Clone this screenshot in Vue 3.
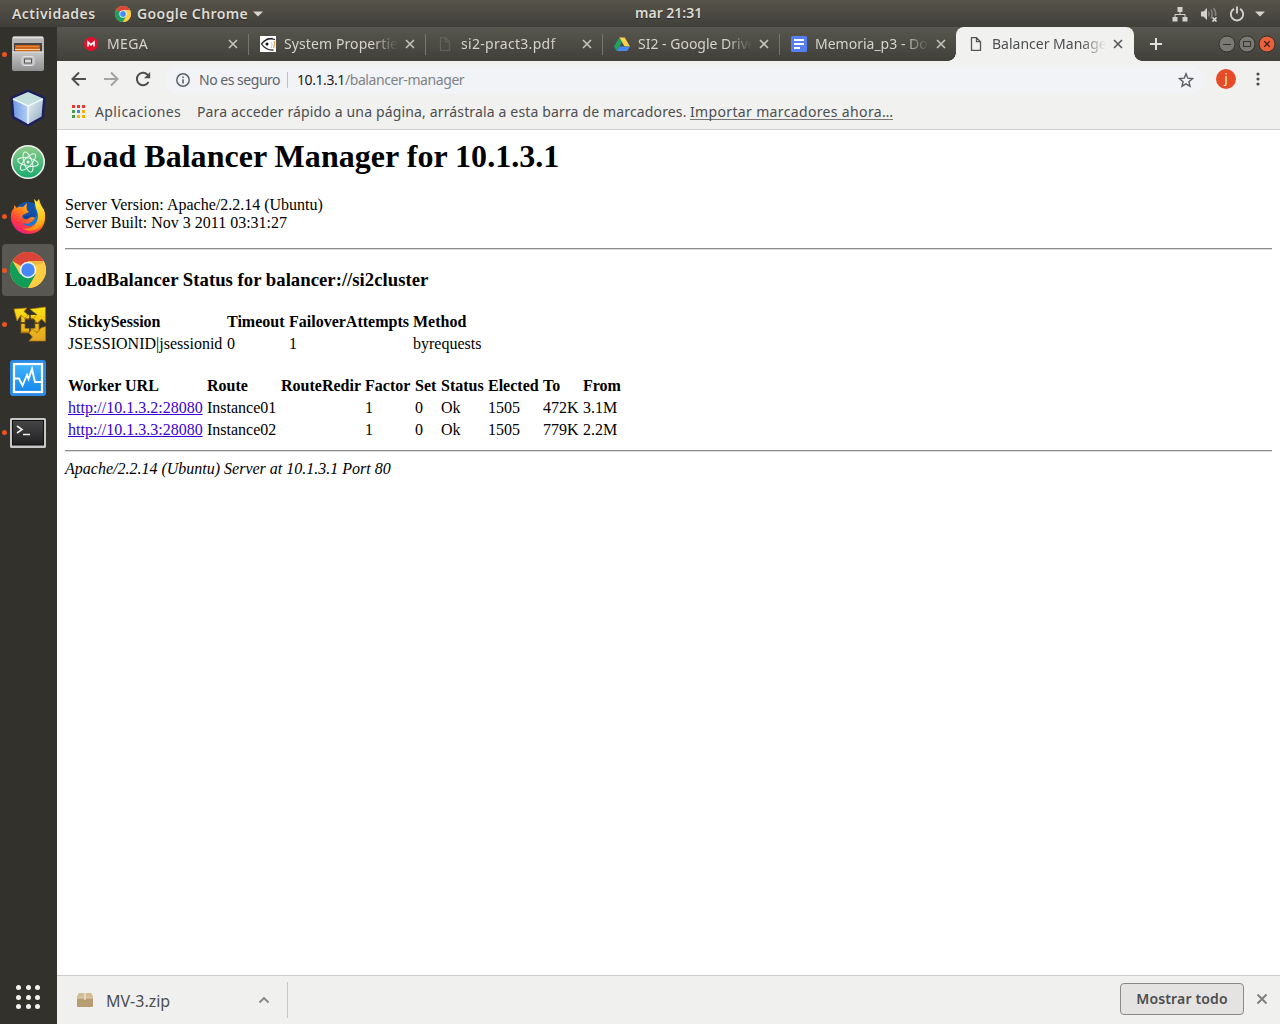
<script setup>
const tabs = [
  { title: 'MEGA', icon: 'mega' },
  { title: 'System Properties', icon: 'fish' },
  { title: 'si2-pract3.pdf', icon: 'page' },
  { title: 'SI2 - Google Drive', icon: 'drive' },
  { title: 'Memoria_p3 - Doc', icon: 'docs' },
  { title: 'Balancer Manager', icon: 'page', active: true },
]
const appColors = ['#e53935', '#e53935', '#e53935', '#43a047', '#4285f4', '#f4b400', '#43a047', '#f4b400', '#f4b400']
const workers = [
  { url: 'http://10.1.3.2:28080', cells: ['Instance01', '', '1', '0', 'Ok', '1505', '472K', '3.1M'] },
  { url: 'http://10.1.3.3:28080', cells: ['Instance02', '', '1', '0', 'Ok', '1505', '779K', '2.2M'] },
]
const workerHeads = ['Worker URL', 'Route', 'RouteRedir', 'Factor', 'Set', 'Status', 'Elected', 'To', 'From']
const dock = [
  { name: 'files', running: true },
  { name: 'netbeans' },
  { name: 'atom' },
  { name: 'firefox', running: true },
  { name: 'chrome', running: true, active: true },
  { name: 'vmware', running: true },
  { name: 'monitor' },
  { name: 'terminal', running: true },
]
</script>

<template>
  <div class="desktop">
    <header class="topbar">
      <span class="activities">Actividades</span>
      <svg class="tb-chrome" width="16" height="16" viewBox="0 0 36 36">
        <circle cx="18" cy="18" r="18" fill="#fc4" />
        <path d="M18 18 2.4 9A18 18 0 0 1 33.6 9Z" fill="#dd4437" />
        <path d="M18 18 2.4 9A18 18 0 0 0 18 36L26 22Z" fill="#1da05c" />
        <path d="M18 9H33.6A18 18 0 0 1 18 36L26 22Z" fill="#fdcd45" />
        <circle cx="18" cy="18" r="8.2" fill="#fff" /><circle cx="18" cy="18" r="6.5" fill="#4a8af5" />
      </svg>
      <span class="appname">Google Chrome</span>
      <svg class="tri" width="10" height="6"><path d="M0 .5H10L5 5.5Z" fill="#d6d4cf" /></svg>
      <span class="clock">mar 21:31</span>
      <div class="tray">
        <svg width="16" height="16" fill="#d3d1cc"><path d="M5.500 1h5v5h-5zM.5 11h5v4.500h-5zM10.500 11h5v4.500h-5z" /><path d="M8 6v2.500M3 11V8.500H13V11" fill="none" stroke="#d3d1cc" /></svg>
        <svg width="18" height="16"><path d="M1 5.500h2.500L7 2v12L3.500 10.500H1z" fill="#d3d1cc" /><path d="M8.500 5.500q1.300 2.500 0 5M11 3.500q2.400 4.500 0 9M13.500 2q3 4 2 8" fill="none" stroke="#85837c" stroke-width="1.500" /><path d="m12.500 11.500 4 4m0-4-4 4" stroke="#e0ded9" stroke-width="1.600" /></svg>
        <svg class="power" width="16" height="16"><path d="M5 2.800A6.200 6.200 0 1 0 11 2.800M8 .5V7.500" fill="none" stroke="#d3d1cc" stroke-width="1.900" /></svg>
        <svg class="menu-tri" width="10" height="6"><path d="M0 .5H10L5 5.500Z" fill="#d6d4cf" /></svg>
      </div>
    </header>

    <div class="body">
      <aside class="dock">
        <div v-for="d in dock" :key="d.name" class="slot">
          <i v-if="d.running" class="dot"></i>
          <div class="tile" :class="{ on: d.active, low: d.name === 'terminal' }">
            <svg v-if="d.name === 'files'" width="36" height="36" viewBox="0 0 36 36">
              <defs><linearGradient id="fg" x2="0" y2="1"><stop stop-color="#c9c9c9" /><stop offset="1" stop-color="#8f8f8f" /></linearGradient></defs>
              <rect x="2" y=".5" width="32" height="34" rx="2.500" fill="#b5b5b5" /><path d="M3 1.500h30" stroke="#ddd" stroke-width="2" />
              <rect x="4" y="7" width="28" height="10" fill="#454545" /><path d="M5 9h25v7H5z" fill="#c75c15" /><path d="M6 10.500h23" stroke="#e88a3a" stroke-width="1.200" /><path d="M5 13.500h25" stroke="#ffd09a" stroke-width="1.200" />
              <path d="M2 15.500h32V33q0 2-2 2H4q-2 0-2-2z" fill="url(#fg)" /><path d="M2 16h32" stroke="#ddd" />
              <rect x="12" y="20.500" width="12" height="9" rx="2" fill="#bbb" stroke="#e2e2e2" /><rect x="14.500" y="23" width="7" height="4" fill="#ddd" stroke="#555" />
            </svg>
            <svg v-else-if="d.name === 'netbeans'" width="36" height="38" viewBox="0 0 36 38">
              <defs><linearGradient id="nb"><stop stop-color="#6f98e4" /><stop offset="1" stop-color="#b5d0f3" /></linearGradient><linearGradient id="nr" x2="1" y2="1"><stop stop-color="#e8f0f6" /><stop offset="1" stop-color="#8fa9c0" /></linearGradient></defs>
              <path d="M18 2 34 9 32.500 28 18 36 3.500 28 2 9Z" fill="#a9c4e8" stroke="#1c1f5d" stroke-width="3" stroke-linejoin="round" />
              <path d="M3 10 18 17V35L4.500 27.500Z" fill="url(#nb)" /><path d="M33 10 18 17V35L31.500 27.500Z" fill="url(#nr)" /><path d="M18 3 33 9.500 18 17 3 9.500Z" fill="#c3dedb" /><path d="M3 10 18 17 33 10M18 17V35" fill="none" stroke="#eef8fb" stroke-width="1.400" />
            </svg>
            <svg v-else-if="d.name === 'atom'" width="34" height="34" viewBox="0 0 34 34">
              <defs><linearGradient id="ag" x2="0" y2="1"><stop stop-color="#90cc8a" /><stop offset="1" stop-color="#18a96f" /></linearGradient></defs>
              <circle cx="17" cy="17" r="16.200" fill="url(#ag)" stroke="#eef3ef" stroke-width="1.600" />
              <g fill="none" stroke="#e9f8ef" stroke-width="1"><ellipse cx="17" cy="17" rx="10.500" ry="4" transform="rotate(12 17 17)" /><ellipse cx="17" cy="17" rx="10.500" ry="4" transform="rotate(72 17 17)" /><ellipse cx="17" cy="17" rx="10.500" ry="4" transform="rotate(132 17 17)" /></g><circle cx="17" cy="17" r="1.500" fill="#fff" />
            </svg>
            <svg v-else-if="d.name === 'firefox'" width="36" height="36" viewBox="0 0 36 36">
              <defs><linearGradient id="ff" x1=".8" x2=".2" y2="1"><stop stop-color="#ffd92e" /><stop offset=".45" stop-color="#ff8a16" /><stop offset=".75" stop-color="#ff3647" /><stop offset="1" stop-color="#e3158b" /></linearGradient><linearGradient id="fy" x2="0" y2="1"><stop stop-color="#fff43f" /><stop offset=".6" stop-color="#ffc11c" /><stop offset="1" stop-color="#ff8415" /></linearGradient></defs>
              <circle cx="18" cy="19" r="14.500" fill="#1279dc" /><path d="M9 7Q16 1 24 6L27 17 20 25 11 19Z" fill="#1550a8" />
              <path d="M4 7 7 10Q10 8 13 9L17 5Q16 9 17 12L19 14 13 17Q11 19 14 21 18 22 19 20 23 18 25 20 20 28 12 25 18 31 25 26 31 20 26 9 25 4 29 1 30 5 32 9 36 14 35 22 33 35 19 36 5 36 1 22 0 14 4 10Z" fill="url(#ff)" />
              <path d="M24 1 26 10Q31 20 24 28 17 32 12 30 20 36 29 30 37 23 34 12 31 7 28 5L24 1Z" fill="url(#fy)" />
              <path d="M14 18.500Q19 18 22 16 20 21 14 20Z" fill="#123e91" />
            </svg>
            <svg v-else-if="d.name === 'chrome'" width="36" height="36" viewBox="0 0 36 36">
              <circle cx="18" cy="18" r="18" fill="#fdcd45" /><path d="M18 18 2.400 9A18 18 0 0 1 33.600 9H18Z" fill="#dc4437" />
              <path d="M10.200 22.500 2.400 9A18 18 0 0 0 18 36L25.800 22.500 18 18Z" fill="#109d58" /><path d="M18 9H33.600A18 18 0 0 1 18 36L25.800 22.500Z" fill="#ffcd44" />
              <path d="M18 9H33.600L32 12 24 13Z" fill="#e5ac38" opacity=".6" /><circle cx="18" cy="18" r="8.300" fill="#f3f3f3" /><circle cx="18" cy="18" r="6.700" fill="#4687f4" />
            </svg>
            <svg v-else-if="d.name === 'vmware'" class="vm" width="34" height="36" viewBox="0 0 34 36">
              <defs><linearGradient id="vm" gradientUnits="userSpaceOnUse" x1="0" y1="0" x2="0" y2="36"><stop stop-color="#ffe81a" /><stop offset=".5" stop-color="#f0bd10" /><stop offset="1" stop-color="#e3a42a" /></linearGradient></defs>
              <path d="M11 11H25V25H11Z" fill="none" stroke="#a87606" stroke-width="4.500" /><path d="M11 10.500H25V24H11Z" fill="none" stroke="url(#vm)" stroke-width="3" />
              <path d="M18 8v5M9 17h4M23 17h4M18 22v5" stroke="#3a3223" stroke-width="1.500" />
              <g fill="url(#vm)" stroke="#a87606" stroke-width=".7" stroke-linejoin="round">
                <path d="M2 3 15 2 12 5.500 16 9 13 12.500 9 9 5 15Z" />
                <path d="M18 3 33.500 1V17L29.500 13 25.500 17 21.500 12.500 25 8.500 21.500 6Z" />
                <path d="M17 35 20.500 31 17 27 20.500 23 25 27 29 22 33.500 20.500V35Z" />
              </g>
            </svg>
            <svg v-else-if="d.name === 'monitor'" width="36" height="36" viewBox="0 0 36 36">
              <defs><linearGradient id="mg" x2="0" y2="1"><stop stop-color="#42b5fa" /><stop offset="1" stop-color="#1687ed" /></linearGradient></defs>
              <rect width="36" height="36" rx="3" fill="#2a8ae4" /><rect x="4" y="4" width="28" height="28" fill="url(#mg)" stroke="#fff" stroke-width="2.200" />
              <path d="M4 18.500h5l3.500 7L17 15l1.500 4 3.500-10 3 13h6" fill="none" stroke="#fff" stroke-width="1.900" />
            </svg>
            <svg v-else width="36" height="30" viewBox="0 0 36 30">
              <defs><linearGradient id="tg" x2="0" y2="1"><stop stop-color="#464646" /><stop offset="1" stop-color="#202020" /></linearGradient></defs>
              <rect width="36" height="30" rx="1.500" fill="#c7c7c7" /><rect x="2.500" y="2.500" width="31" height="24.500" fill="url(#tg)" stroke="#111" />
              <path d="m7 8 5 3.500L7 15M13 16.500h7" fill="none" stroke="#eee" stroke-width="1.600" />
            </svg>
          </div>
        </div>
        <div class="grid9"><i v-for="n in 9" :key="n"></i></div>
      </aside>

      <main class="window">
        <div class="tabstrip">
          <div v-for="(t, i) in tabs" :key="t.title" class="tab" :class="{ active: t.active, nosep: i === 4 }">
            <span class="fav">
              <svg v-if="t.icon === 'mega'" width="16" height="16"><circle cx="8" cy="8" r="7" fill="#e5102b" /><path d="M5 10.500V6L8 8.800 11 6v4.500" fill="none" stroke="#fff" stroke-width="1.600" /></svg>
              <svg v-else-if="t.icon === 'fish'" width="16" height="16"><path d="M0 0h16v16H0z" fill="#fff" /><path d="M15 3.500Q7 1 1.500 8q4.500 6.500 12 6M3.500 5.500l4-2.500 5-.5" fill="none" stroke="#222" stroke-width="1.300" /><path d="M14 5q1.500 3-.5 7" stroke="#eaa65a" fill="none" stroke-width="1.300" /><path d="M11.500 6q1.500 3-.5 6" stroke="#a9cbea" fill="none" /><circle cx="7" cy="8" r="1.500" fill="#111" /></svg>
              <svg v-else-if="t.icon === 'drive'" width="16" height="16"><path d="M5.300 1.500h5.400L16 10.500h-5.400z" fill="#ffd04b" /><path d="M5.300 1.500 8 6.200 2.700 15 0 10.500z" fill="#1ea362" /><path d="M5.500 10.500H16L13.300 15H2.700z" fill="#4688f4" /></svg>
              <svg v-else-if="t.icon === 'docs'" width="16" height="16"><rect width="16" height="16" rx="1.500" fill="#557ff2" /><path d="M3 4h10M3 8h10M3 12h6" stroke="#fff" stroke-width="2" /></svg>
              <svg v-else width="16" height="16"><path d="M3.500 1.700h5l4 4v8.600h-9zM8.500 1.700v4h4" fill="none" :stroke="t.active ? '#555' : '#626159'" stroke-width="1.300" /></svg>
            </span>
            <span class="title" :class="'t' + i">{{ t.title }}</span>
            <svg class="close" width="10" height="10"><path d="m1 1 8 8M9 1 1 9" fill="none" :stroke="t.active ? '#555' : '#c5c4bd'" stroke-width="1.600" /></svg>
            <template v-if="t.active"><i class="curve left"></i><i class="curve right"></i></template>
          </div>
          <svg class="plus" width="12" height="12"><path d="M6 0v12M0 6h12" stroke="#e2e1dc" stroke-width="2" /></svg>
          <div class="controls">
            <svg width="18" height="18"><circle cx="9" cy="9" r="8" fill="#7b7a72" stroke="#33322d" /><path d="M5 9.500h8" stroke="#33322d" /></svg>
            <svg width="18" height="18"><circle cx="9" cy="9" r="8" fill="#7b7a72" stroke="#33322d" /><path d="M5.500 6.500h7v5h-7z" fill="none" stroke="#33322d" /></svg>
            <svg width="18" height="18"><circle cx="9" cy="9" r="8" fill="#e9603a" stroke="#33322d" /><path d="m6.300 6.300 5.400 5.400m0-5.400-5.400 5.400" stroke="#43231a" stroke-width="1.300" /></svg>
          </div>
        </div>

        <div class="toolbar">
          <svg width="16" height="16"><path d="M15 8H2M8 1.500 1.500 8 8 14.500" fill="none" stroke="#4f4f4d" stroke-width="2" /></svg>
          <svg width="16" height="16"><path d="M1 8h13M8 1.500 14.500 8 8 14.500" fill="none" stroke="#a3a3a0" stroke-width="2" /></svg>
          <svg width="16" height="16"><path d="M13.500 11A6.200 6.200 0 1 1 12.500 3.600L14 5" fill="none" stroke="#4f4f4d" stroke-width="2" /><path d="M15.200 1v6.200H9z" fill="#4f4f4d" /></svg>
          <div class="omnibox">
            <svg width="14" height="14"><circle cx="7" cy="7" r="6.200" fill="none" stroke="#5f6368" stroke-width="1.500" /><path d="M7 6.200v4.300M7 3.500v1.600" stroke="#5f6368" stroke-width="1.600" /></svg>
            <span class="insecure">No es seguro</span><i class="bar"></i>
            <span class="url"><b>10.1.3.1</b>/balancer-manager</span>
            <svg class="star" width="16" height="16"><path d="m8 1.800 1.800 4.400 4.700.4-3.600 3.100 1.100 4.600L8 11.800l-4 2.500 1.100-4.600-3.600-3.100 4.700-.4z" fill="none" stroke="#5a5e63" stroke-width="1.400" /></svg>
          </div>
          <span class="avatar">j</span>
          <svg class="more" width="4" height="14" fill="#4f4f4d"><circle cx="2" cy="2" r="1.600" /><circle cx="2" cy="7" r="1.600" /><circle cx="2" cy="12" r="1.600" /></svg>
        </div>

        <div class="bookmarks">
          <div class="apps"><i v-for="(c, i) in appColors" :key="i" :style="{ background: c }"></i></div>
          <span class="apl">Aplicaciones</span>
          <span class="hint">Para acceder rápido a una página, arrástrala a esta barra de marcadores.</span>
          <span class="import">Importar marcadores ahora…</span>
        </div>

        <section class="page">
          <h1>Load Balancer Manager for 10.1.3.1</h1>
          <div class="info">Server Version: Apache/2.2.14 (Ubuntu)<br />Server Built: Nov 3 2011 03:31:27</div>
          <hr class="first" />
          <h3>LoadBalancer Status for balancer://si2cluster</h3>
          <table class="status">
            <tbody>
              <tr><th>StickySession</th><th>Timeout</th><th>FailoverAttempts</th><th>Method</th></tr>
              <tr><td>JSESSIONID|jsessionid</td><td>0</td><td>1</td><td>byrequests</td></tr>
            </tbody>
          </table>
          <table class="workers">
            <tbody>
              <tr><th v-for="h in workerHeads" :key="h">{{ h }}</th></tr>
              <tr v-for="w in workers" :key="w.url"><td><a>{{ w.url }}</a></td><td v-for="(c, i) in w.cells" :key="i">{{ c }}</td></tr>
            </tbody>
          </table>
          <hr />
          <address>Apache/2.2.14 (Ubuntu) Server at 10.1.3.1 Port 80</address>
        </section>

        <footer class="shelf">
          <div class="download">
            <svg width="16" height="14"><path d="M2 0h12l2 4v9q0 1-1 1H1q-1 0-1-1V4z" fill="#b79d72" /><path d="M2 0h12l2 5H0z" fill="#d3bd95" /><path d="M0 5h16" stroke="#e1cfac" /><path d="M8 0v7" stroke="#eee2ca" stroke-width="1.500" /></svg>
            <span class="file">MV-3.zip</span>
            <svg class="chev" width="12" height="8"><path d="m1.500 6.500 4.500-4.500 4.500 4.500" fill="none" stroke="#858583" stroke-width="1.800" /></svg>
          </div>
          <span class="showall">Mostrar todo</span>
          <svg class="sclose" width="12" height="12"><path d="m1.500 1.500 9 9m0-9-9 9" stroke="#80807e" stroke-width="2" /></svg>
        </footer>
      </main>
    </div>
  </div>
</template>

<style>
body { margin: 0; background: #fff; }
</style>

<style scoped>
* { box-sizing: border-box; }
svg { display: block; flex: none; }
.desktop { width: 1280px; height: 1024px; display: flex; flex-direction: column; overflow: hidden; font-family: "Noto Sans", "Open Sans", sans-serif; white-space: nowrap; }
.topbar { height: 27px; flex: none; display: flex; align-items: center; position: relative; padding: 0 15px 0 12px; background: linear-gradient(#57544a, #403f3a); color: #dfdbd2; font-size: 14px; font-weight: 600; text-shadow: 0 1px 1px #2a2925; }
.activities { width: 103px; letter-spacing: .46px; }
.appname { width: 116px; margin-left: 6px; letter-spacing: .4px; }
.clock { position: absolute; left: 635px; top: 3px; line-height: 19px; }
.tray { display: flex; align-items: center; gap: 12px; margin-left: auto; }
.power { margin-left: -1px; }
.menu-tri { margin-left: -2px; }
.body { display: flex; flex: 1; min-height: 0; }
.dock { width: 57px; flex: none; background: #33312c; display: flex; flex-direction: column; }
.slot { height: 54px; position: relative; display: flex; align-items: center; padding-left: 2px; }
.dot { position: absolute; left: 2px; top: 25px; width: 5px; height: 5px; border-radius: 50%; background: #e95420; }
.tile { width: 52px; height: 52px; border-radius: 4px; display: flex; align-items: center; justify-content: center; }
.tile.on { background: #595752; }
.tile.low { padding-top: 2px; }
.vm { margin-left: 2px; }
.grid9 { display: grid; grid-template-columns: repeat(3, 5px); gap: 4.500px; margin: auto 0 15px 16px; }
.grid9 i { width: 5px; height: 5px; border-radius: 50%; background: #f3f3f1; }
.window { flex: 1; min-width: 0; display: flex; flex-direction: column; background: #fff; }
.tabstrip { height: 34px; flex: none; display: flex; padding-left: 15px; align-items: center; background: linear-gradient(#58574e, #403f3a); color: #d5d3cb; font-size: 14px; }
.tab { width: 177px; height: 34px; flex: none; position: relative; display: flex; align-items: center; padding: 0 11px; }
.tab:not(.active):not(.nosep)::after { content: ""; position: absolute; right: 0; top: 7px; height: 21px; width: 1px; background: #77766d; }
.title { width: 114px; margin-left: 8px; margin-bottom: 2px; overflow: hidden; -webkit-mask-image: linear-gradient(90deg, #000 78%, transparent); mask-image: linear-gradient(90deg, #000 78%, transparent); }
.t0 { letter-spacing: .4px; }
.t1 { letter-spacing: .1px; }
.t2 { letter-spacing: .3px; }
.close { margin-left: 7px; }
.tab.active { width: 178px; background: #f1f1ef; border-radius: 8px 8px 0 0; color: #4c4e50; margin-left: -1px; padding-left: 12px; }
.curve { position: absolute; bottom: 0; width: 8px; height: 8px; }
.curve.left { left: -8px; background: radial-gradient(circle at 0 0, transparent 7.500px, #f1f1ef 8px); }
.curve.right { right: -8px; background: radial-gradient(circle at 100% 0, transparent 7.500px, #f1f1ef 8px); }
.plus { margin-left: 16px; }
.controls { display: flex; gap: 2px; margin-left: auto; margin-right: 4px; }
.toolbar { height: 37px; flex: none; background: #f1f1ef; display: flex; align-items: center; padding: 0 0 1px 14px; gap: 16px; }
.omnibox { width: 1039px; height: 28px; border-radius: 14px; background: #f1f3f6; display: flex; align-items: center; padding: 0 10px 0 11px; margin-left: -2px; margin-top: 1px; font-size: 14px; color: #5f6368; }
.insecure { margin-left: 9px; width: 81px; letter-spacing: -.48px; }
.bar { width: 1px; height: 16px; background: #bdc0c4; margin: 0 9px 0 7px; }
.url { color: #808488; letter-spacing: -.42px; }
.url b { font-weight: 400; color: #202124; }
.star { margin-left: auto; }
.avatar { width: 20px; height: 20px; border-radius: 50%; background: #e64a26; color: #fff; font-size: 12px; line-height: 19px; text-align: center; margin-left: -4px; }
.more { margin-left: 4px; }
.bookmarks { height: 32px; flex: none; background: #f1f1ef; border-bottom: 1px solid #cfcfcc; display: flex; align-items: center; padding: 0 0 4px 15px; font-size: 14px; color: #4c4e50; }
.apps { display: grid; grid-template-columns: repeat(3, 3px); gap: 2px; }
.apps i { width: 3px; height: 3px; }
.apl { margin-left: 10px; width: 102px; letter-spacing: .4px; }
.hint { width: 493px; letter-spacing: .15px; }
.import { border-bottom: 1px solid #777; line-height: 15px; letter-spacing: .35px; }
.page { flex: 1; padding: 8px 8px 0; font: 16px/18px "Liberation Serif", serif; color: #000; }
h1 { margin: 0 0 21px; font-size: 32px; line-height: 37px; letter-spacing: .03px; }
.info { height: 36px; }
hr { margin: 8px 0; border: 0; border-top: 1px solid #8c8c8c; border-bottom: 1px solid #dedede; height: 2px; }
hr.first { margin: 16px 0 19px; }
h3 { margin: 0 0 20px; font-size: 18.720px; line-height: 21px; letter-spacing: .02px; }
table { border-spacing: 2px; border-collapse: separate; }
th, td { padding: 1px; text-align: left; height: 20px; }
.status th:nth-child(1) { width: 157px; }
.status th:nth-child(2) { width: 60px; }
.status th:nth-child(3) { width: 122px; }
.workers { margin-top: 18px; }
.workers th:nth-child(1) { width: 137px; }
.workers th:nth-child(2) { width: 72px; }
.workers th:nth-child(3) { width: 82px; }
.workers th:nth-child(4) { width: 48px; }
.workers th:nth-child(5) { width: 24px; }
.workers th:nth-child(6) { width: 45px; }
.workers th:nth-child(7) { width: 53px; }
.workers th:nth-child(8) { width: 38px; }
a { color: #3a00d8; text-decoration: underline; }
.shelf { height: 49px; flex: none; background: #f0f0ee; border-top: 1px solid #cbcdca; display: flex; align-items: center; color: #4c4e50; }
.download { width: 231px; height: 36px; border-right: 1px solid #c9c9c6; display: flex; align-items: center; padding: 0 17px 1px 20px; font-size: 16px; }
.file { margin-left: 13px; margin-top: 2px; }
.chev { margin-left: auto; }
.showall { margin-left: auto; margin-bottom: 2px; width: 124px; height: 32px; line-height: 30px; border: 1px solid #8b8987; border-radius: 4px; background: #e5e3e1; text-align: center; font-size: 14px; font-weight: 600; letter-spacing: .15px; }
.sclose { margin: 0 12px 2px; }
</style>
